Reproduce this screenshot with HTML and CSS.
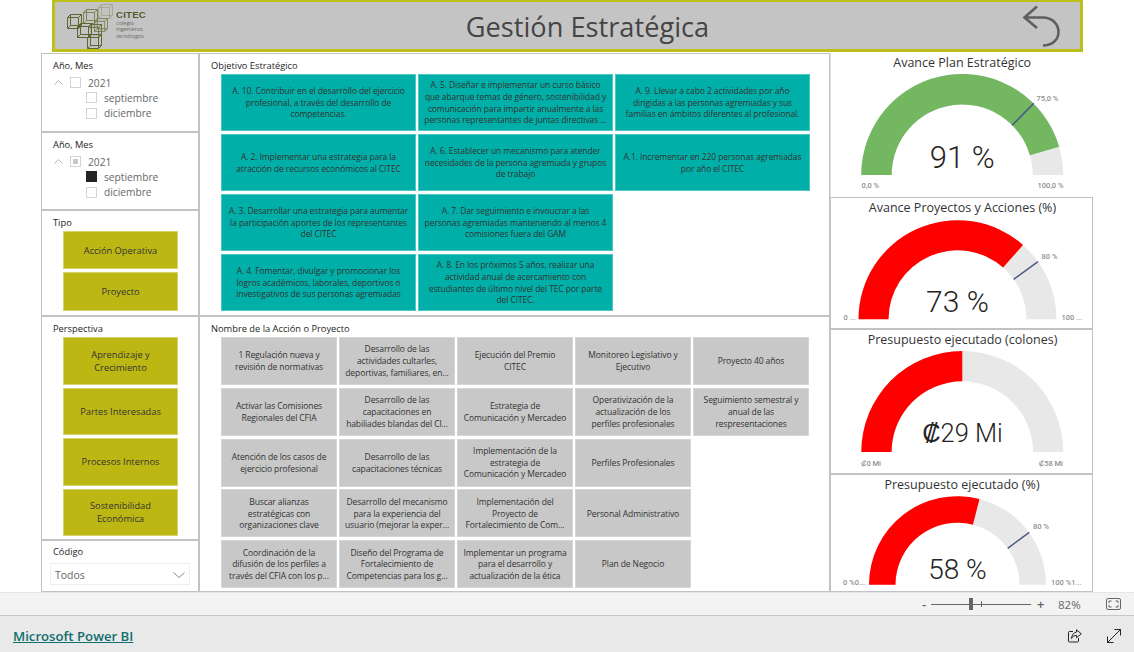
FILE: index.html
```html
<!DOCTYPE html>
<html lang="es">
<head>
    <meta charset="UTF-8">
    <title>Gestión Estratégica</title>
    <link rel="stylesheet" href="styles.css">
</head>
<body>
    <svg class="defs" width="0" height="0">
        <symbol id="cube" viewBox="-0.5 -0.5 15 15">
            <path d="M0 3h11v11H0z M3 0h11v11H3z M0 3l3-3 M11 3l3-3 M11 14l3-3 M0 14l3-3" fill="none" stroke="currentColor"/>
        </symbol>
    </svg>

    <div class="report">
        <header class="banner">
            <div class="logo">
                <svg class="logo-mark" width="47" height="46" viewBox="67 3 47 46">
                    <use href="#cube" x="98" y="4" width="15" height="15" class="cube-light"/>
                    <use href="#cube" x="83" y="9" width="15" height="15" class="cube-mid"/>
                    <use href="#cube" x="94" y="18" width="14" height="14" class="cube-mid"/>
                    <use href="#cube" x="67" y="14" width="15" height="15" class="cube-dark"/>
                    <use href="#cube" x="77" y="23" width="15" height="15" class="cube-dark"/>
                    <use href="#cube" x="88" y="24" width="14" height="14" class="cube-dark"/>
                    <use href="#cube" x="87" y="34" width="15" height="15" class="cube-dark"/>
                </svg>
                <div class="logo-text">
                    <strong>CITEC</strong>
                    <span>colegio</span>
                    <span>ingenieros</span>
                    <span>tecnólogos</span>
                </div>
            </div>
            <h1>Gestión Estratégica</h1>
            <svg class="back" width="38" height="42" viewBox="0 0 38 42">
                <path d="M14 1.5 L1.5 12.5 L14 23 M1.5 12.5 H20 C29 12.5 35.5 19 35.5 27 C35.5 35 29 40.5 20 40.5" fill="none" stroke="#5f5f5f" stroke-width="2.6"/>
            </svg>
        </header>

        <div class="board">
            <aside class="filters">
                <section class="panel tree">
                    <div class="label">Año, Mes</div>
                    <div class="tree-row">
                        <svg class="chev" width="9" height="5" viewBox="0 0 9 5"><path d="M.5 4.5l4-4 4 4" fill="none" stroke="#b5b5b5"/></svg>
                        <span class="check"></span>2021
                    </div>
                    <div class="tree-row sub"><span class="check"></span>septiembre</div>
                    <div class="tree-row sub"><span class="check"></span>diciembre</div>
                </section>
                <section class="panel tree">
                    <div class="label">Año, Mes</div>
                    <div class="tree-row">
                        <svg class="chev" width="9" height="5" viewBox="0 0 9 5"><path d="M.5 4.5l4-4 4 4" fill="none" stroke="#b5b5b5"/></svg>
                        <span class="check partial"></span>2021
                    </div>
                    <div class="tree-row sub"><span class="check on"></span>septiembre</div>
                    <div class="tree-row sub"><span class="check"></span>diciembre</div>
                </section>
                <section class="panel">
                    <div class="label tipo-label">Tipo</div>
                    <div class="olive-list tipo">
                        <div class="tile olive">Acción Operativa</div>
                        <div class="tile olive">Proyecto</div>
                    </div>
                </section>
                <section class="panel">
                    <div class="label tipo-label">Perspectiva</div>
                    <div class="olive-list persp">
                        <div class="tile olive">Aprendizaje y<br>Crecimiento</div>
                        <div class="tile olive">Partes Interesadas</div>
                        <div class="tile olive">Procesos Internos</div>
                        <div class="tile olive">Sostenibilidad<br>Económica</div>
                    </div>
                </section>
                <section class="panel">
                    <div class="label codigo-label">Código</div>
                    <div class="dropdown">
                        Todos
                        <svg width="12" height="6" viewBox="0 0 12 6"><path d="M.5.5l5.5 5 5.5-5" fill="none" stroke="#8a8a8a"/></svg>
                    </div>
                </section>
            </aside>

            <main class="slicers">
                <section class="panel">
                    <div class="label slicer-label">Objetivo Estratégico</div>
                    <div class="tiles objetivos">
                        <div class="tile teal">A. 10. Contribuir en el desarrollo del ejercicio<br>profesional, a través del desarrollo de<br>competencias.</div>
                        <div class="tile teal">A. 5. Diseñar e implementar un curso básico<br>que abarque temas de género, sostenibilidad y<br>comunicación para impartir anualmente a las<br>personas representantes de juntas directivas ...</div>
                        <div class="tile teal">A. 9. Llevar a cabo 2 actividades por año<br>dirigidas a las personas agremiadas y sus<br>familias en ámbitos diferentes al profesional.</div>
                        <div class="tile teal">A. 2. Implementar una estrategia para la<br>atracción de recursos económicos al CITEC</div>
                        <div class="tile teal">A. 6. Establecer un mecanismo para atender<br>necesidades de la persona agremiada y grupos<br>de trabajo</div>
                        <div class="tile teal">A.1. Incrementar en 220 personas agremiadas<br>por año el CITEC</div>
                        <div class="tile teal">A. 3. Desarrollar una estrategia para aumentar<br>la participación aportes de los representantes<br>del CITEC</div>
                        <div class="tile teal">A. 7. Dar seguimiento e invoucrar a las<br>personas agremiadas manteniendo al menos 4<br>comisiones fuera del GAM</div>
                        <div class="tile empty"></div>
                        <div class="tile teal">A. 4. Fomentar, divulgar y promocionar los<br>logros académicos, laborales, deportivos o<br>investigativos de sus personas agremiadas</div>
                        <div class="tile teal">A. 8. En los próximos 5 años, realizar una<br>actividad anual de acercamiento con<br>estudiantes de último nivel del TEC por parte<br>del CITEC.</div>
                    </div>
                </section>
                <section class="panel">
                    <div class="label slicer-label">Nombre de la Acción o Proyecto</div>
                    <div class="tiles acciones">
                        <div class="tile grey">1 Regulación nueva y<br>revisión de normativas</div>
                        <div class="tile grey">Desarrollo de las<br>actividades cultarles,<br>deportivas, familiares, en...</div>
                        <div class="tile grey">Ejecución del Premio<br>CITEC</div>
                        <div class="tile grey">Monitoreo Legislativo y<br>Ejecutivo</div>
                        <div class="tile grey">Proyecto 40 años</div>
                        <div class="tile grey">Activar las Comisiones<br>Regionales del CFIA</div>
                        <div class="tile grey">Desarrollo de las<br>capacitaciones en<br>habiliades blandas del Cl...</div>
                        <div class="tile grey">Estrategia de<br>Comunicación y Mercadeo</div>
                        <div class="tile grey">Operativización de la<br>actualización de los<br>perfiles profesionales</div>
                        <div class="tile grey">Seguimiento semestral y<br>anual de las<br>respresentaciones</div>
                        <div class="tile grey">Atención de los casos de<br>ejercicio profesional</div>
                        <div class="tile grey">Desarrollo de las<br>capacitaciones técnicas</div>
                        <div class="tile grey">Implementación de la<br>estrategia de<br>Comunicación y Mercadeo</div>
                        <div class="tile grey">Perfiles Profesionales</div>
                        <div class="tile empty"></div>
                        <div class="tile grey">Buscar alianzas<br>estratégicas con<br>organizaciones clave</div>
                        <div class="tile grey">Desarrollo del mecanismo<br>para la experiencia del<br>usuario (mejorar la exper...</div>
                        <div class="tile grey">Implementación del<br>Proyecto de<br>Fortalecimiento de Com...</div>
                        <div class="tile grey">Personal Administrativo</div>
                        <div class="tile empty"></div>
                        <div class="tile grey">Coordinación de la<br>difusión de los perfiles a<br>través del CFIA con los p...</div>
                        <div class="tile grey">Diseño del Programa de<br>Fortalecimiento de<br>Competencias para los g...</div>
                        <div class="tile grey">Implementar un programa<br>para el desarrollo y<br>actualización de la ética</div>
                        <div class="tile grey">Plan de Negocio</div>
                    </div>
                </section>
            </main>

            <aside class="gauges">
                <section class="panel gauge first">
                    <svg viewBox="831 53 261 144">
                        <text class="g-title" x="961.7" y="66.5">Avance Plan Estratégico</text>
                        <path class="g-track" d="M860.7 175A101 101 0 0 1 1062.7 175H1032.2A70.5 70.5 0 0 0 891.2 175Z"/>
                        <path class="g-green" d="M860.7 175A101 101 0 0 1 1058.7 146.8L1029.4 155.3A70.5 70.5 0 0 0 891.2 175Z"/>
                        <path class="g-target" d="M1011.7 125.3L1033.3 103.3"/>
                        <text class="g-value" x="961.7" y="168">91 %</text>
                        <text class="g-small" x="1036" y="101">75,0 %</text>
                        <text class="g-small" x="861" y="188">0,0 %</text>
                        <text class="g-small end" x="1063" y="188">100,0 %</text>
                    </svg>
                </section>
                <section class="panel gauge">
                    <svg viewBox="831 198 261 130">
                        <text class="g-title" x="962.5" y="212">Avance Proyectos y Acciones (%)</text>
                        <path class="g-track" d="M858.5 319.3A99 99 0 0 1 1056.5 319.3H1026.5A69 69 0 0 0 888.5 319.3Z"/>
                        <path class="g-red" d="M858.5 319.3A99 99 0 0 1 1023 245L1003.1 267.5A69 69 0 0 0 888.5 319.3Z"/>
                        <path class="g-target" d="M1013.7 279.3L1038 261.7"/>
                        <text class="g-value v-73" x="957.5" y="312">73 %</text>
                        <text class="g-small" x="1041.5" y="259">80 %</text>
                        <text class="g-small" x="843.5" y="320">0 ...</text>
                        <text class="g-small" x="1061.5" y="320">100 ...</text>
                    </svg>
                </section>
                <section class="panel gauge">
                    <svg viewBox="831 330 261 143">
                        <text class="g-title" x="962.5" y="344">Presupuesto ejecutado (colones)</text>
                        <path class="g-track" d="M861.3 452A101 101 0 0 1 1063.3 452H1033A70.7 70.7 0 0 0 891.6 452Z"/>
                        <path class="g-red" d="M861.3 452A101 101 0 0 1 962.3 351V381.3A70.7 70.7 0 0 0 891.6 452Z"/>
                        <text class="g-value v-colones" x="962.5" y="441.5">₡29 Mi</text>
                        <text class="g-small" x="861" y="465.5">₡0 Mi</text>
                        <text class="g-small end" x="1063" y="465.5">₡58 Mi</text>
                    </svg>
                </section>
                <section class="panel gauge">
                    <svg viewBox="831 475 261 116">
                        <text class="g-title" x="962" y="489">Presupuesto ejecutado (%)</text>
                        <path class="g-track" d="M869 584.7A88.5 88.5 0 0 1 1046 584.7H1019.5A62 62 0 0 0 895.5 584.7Z"/>
                        <path class="g-red" d="M869 584.7A88.5 88.5 0 0 1 979.5 499L972.9 524.7A62 62 0 0 0 895.5 584.7Z"/>
                        <path class="g-target" d="M1007.7 548.3L1029.3 532.3"/>
                        <text class="g-value v-58" x="957.5" y="579">58 %</text>
                        <text class="g-small" x="1033" y="529">80 %</text>
                        <text class="g-small" x="843" y="585">0 %0...</text>
                        <text class="g-small" x="1051" y="585">100 %1...</text>
                    </svg>
                </section>
            </aside>
        </div>
    </div>

    <div class="zoombar">
        <span class="zoom-btn">-</span>
        <div class="slider"><span class="thumb"></span><span class="tick"></span></div>
        <span class="zoom-btn plus">+</span>
        <span class="zoom-pct">82%</span>
        <svg class="fit" width="15" height="12" viewBox="0 0 15 12">
            <rect x=".5" y=".5" width="14" height="11" rx="1.5" fill="none" stroke="#666"/>
            <path d="M3 5V3h2.5M9.5 3H12v2M12 7v2H9.5M5.5 9H3V7" fill="none" stroke="#666"/>
        </svg>
    </div>

    <footer class="footer">
        <a href="#" class="brand">Microsoft Power BI</a>
        <svg class="foot-icon share" width="14" height="14" viewBox="0 0 14 14">
            <path d="M5 2.5H1.5a1 1 0 0 0-1 1v8.500a1 1 0 0 0 1 1h8a1 1 0 0 0 1-1V9" fill="none" stroke="#252423"/>
            <path d="M8.500.8L13.300 4.800 8.500 8.700V6.400C6.500 6.400 4.700 7.300 3.500 9.500 3.800 6 5.800 3.300 8.500 3.100Z" fill="none" stroke="#252423"/>
        </svg>
        <svg class="foot-icon" width="14" height="14" viewBox="0 0 14 14">
            <path d="M.5 13.500L13.500.5M7.500.5h6v6M.5 7.500v6h6" fill="none" stroke="#252423"/>
        </svg>
    </footer>
</body>
</html>
```

FILE: styles.css
```css
* {
    box-sizing: border-box;
}

html, body {
    margin: 0;
    padding: 0;
}

body {
    width: 1134px;
    height: 652px;
    overflow: hidden;
    background: #fff;
    font-family: "Open Sans", "Noto Sans", sans-serif;
    color: #333;
}

.defs {
    position: absolute;
}

.report {
    height: 592px;
    padding-left: 41px;
    overflow: hidden;
}

/* header banner */
.banner {
    display: flex;
    align-items: center;
    width: 1031px;
    height: 52px;
    margin: 0 0 1px 11px;
    background: #c4c4c4;
    border: 3px solid #bcbe1a;
    border-top-width: 2px;
}

.logo {
    display: flex;
    flex: none;
    width: 87px;
    margin-left: 12px;
}

.logo-mark {
    flex: none;
    display: block;
}

.cube-light { color: #a5aa8e; }
.cube-mid { color: #7b8452; }
.cube-dark { color: #5c6631; }

.logo-text {
    display: flex;
    flex-direction: column;
    margin: 6px 0 0 2px;
    font-size: 5.500px;
    line-height: 6.500px;
    color: #6a6a62;
}

.logo-text strong {
    font-family: "Liberation Sans", sans-serif;
    font-size: 9.500px;
    line-height: 11px;
    letter-spacing: .3px;
    color: #4f5a2b;
}

.banner h1 {
    flex: 1;
    margin: 0;
    padding-top: 1px;
    text-align: center;
    font-size: 27.200px;
    font-weight: 400;
    color: #454545;
}

.back {
    flex: none;
    margin: 0 19px 0 2px;
}

/* main layout */
.board {
    display: grid;
    grid-template-columns: 158px 631px 263px;
    height: 539px;
}

.panel {
    border: 1px solid #c2c2c2;
    overflow: hidden;
    background: #fff;
}

.filters {
    display: grid;
    grid-template-rows: 79px 78px 106px 224px 52px;
}

.slicers {
    display: grid;
    grid-template-rows: 263px 276px;
}

.gauges {
    display: grid;
    grid-template-rows: 144px 132px 145px 118px;
}

.label {
    font-size: 9.300px;
    line-height: 13px;
    color: #252423;
}

/* year, month trees */
.tree {
    padding: 5px 0 0 11px;
}

.tree-row {
    display: flex;
    align-items: center;
    height: 15.300px;
    font-size: 10.200px;
    color: #666;
}

.tree .label {
    margin-bottom: 3px;
}

.chev {
    width: 9px;
    margin: 0 7px 0 1px;
}

.check {
    flex: none;
    width: 11px;
    height: 11px;
    margin-right: 7px;
    border: 1px solid #d4d4d4;
    background: #fff;
}

.check.partial {
    padding: 2px;
    background: #c8c8c8;
    background-clip: content-box;
}

.check.on {
    background: #252423;
    border-color: #252423;
}

.sub {
    padding-left: 33px;
}

/* slicer tiles */
.tile {
    display: flex;
    align-items: center;
    justify-content: center;
    text-align: center;
    border: 1px solid transparent;
}

.olive-list {
    display: grid;
    row-gap: 3px;
    width: 115px;
    margin-left: 21px;
}

.tipo-label {
    padding: 5px 0 0 11px;
    height: 20px;
}

.tipo {
    grid-template-rows: 38px 39px;
}

.persp {
    grid-template-rows: repeat(4, 47.500px);
}

.olive {
    background: #bdb713;
    border-color: #d6d36a;
    font-size: 9.300px;
    line-height: 13px;
    color: #333;
}

.codigo-label {
    padding: 4px 0 0 11px;
    height: 18px;
}

.dropdown {
    display: flex;
    align-items: center;
    justify-content: space-between;
    width: 140px;
    height: 22px;
    margin: 4px 0 0 8px;
    padding: 1px 4px 0;
    border: 1px solid #eee;
    font-size: 10.500px;
    color: #666;
}

.slicer-label {
    padding: 5px 0 0 11px;
    height: 19px;
    margin-bottom: 1px;
}

.tiles {
    display: grid;
    margin-left: 21px;
    font-size: 8.500px;
    line-height: 11.700px;
    letter-spacing: -.1px;
}

.objetivos {
    grid-template-columns: repeat(3, 195px);
    grid-auto-rows: 57px;
    gap: 3px 2px;
}

.acciones {
    grid-template-columns: repeat(5, 116px);
    grid-auto-rows: 48px;
    gap: 2.800px 2px;
}

.teal {
    background: #00b0a8;
    border-color: #4cc8c2;
}

.grey {
    background: #c8c8c8;
    border-color: #d6d6d6;
}

.empty {
    background: none;
    border: none;
}

/* gauges */
.gauge svg {
    display: block;
    width: 100%;
    height: 100%;
}

.first {
    border: none;
    border-left: 1px solid #e2e2e2;
}

.g-track { fill: #e8e8e8; }
.g-green { fill: #73b761; }
.g-red { fill: #ff0000; }

.g-target {
    fill: none;
    stroke: #4a5688;
    stroke-width: 1.500px;
}

.g-title {
    text-anchor: middle;
    font-size: 12.500px;
    fill: #333;
}

.g-value {
    text-anchor: middle;
    font-family: Roboto, sans-serif;
    font-weight: 300;
    font-size: 31px;
    fill: #252423;
}

.v-73 { font-size: 30px; }
.v-58 { font-size: 28px; }
.v-colones { font-size: 25.500px; }

.g-small {
    font-family: Roboto, sans-serif;
    font-size: 7.500px;
    font-weight: 500;
    fill: #8f8f8f;
}

.g-small.end {
    text-anchor: end;
}

/* zoom bar and footer */
.zoombar {
    display: flex;
    align-items: center;
    height: 24px;
    padding-left: 922px;
    background: #f3f3f3;
    border-top: 1px solid #e6e6e6;
    border-bottom: 1px solid #c8c8c8;
    color: #666;
}

.zoom-btn {
    width: 9px;
    font-size: 13px;
    line-height: 12px;
    font-weight: 600;
}

.slider {
    position: relative;
    width: 100px;
    height: 1px;
    background: #666;
}

.thumb {
    position: absolute;
    left: 38px;
    top: -6px;
    width: 4px;
    height: 12px;
    background: #666;
}

.tick {
    position: absolute;
    left: 50px;
    top: -3px;
    width: 1px;
    height: 6px;
    background: #666;
}

.plus {
    margin-left: 6px;
}

.zoom-pct {
    margin-left: 12px;
    width: 23px;
    font-size: 11.500px;
}

.fit {
    margin-left: 25px;
}

.footer {
    display: flex;
    align-items: center;
    height: 36px;
    padding: 3px 0 0 13px;
    background: #e9e9e9;
}

.brand {
    flex: none;
    width: 120px;
    margin-right: 935px;
    font-size: 13.200px;
    font-weight: 600;
    color: #0f6e6e;
    white-space: nowrap;
}

.foot-icon {
    flex: none;
}

.share {
    margin-right: 25px;
}
```
